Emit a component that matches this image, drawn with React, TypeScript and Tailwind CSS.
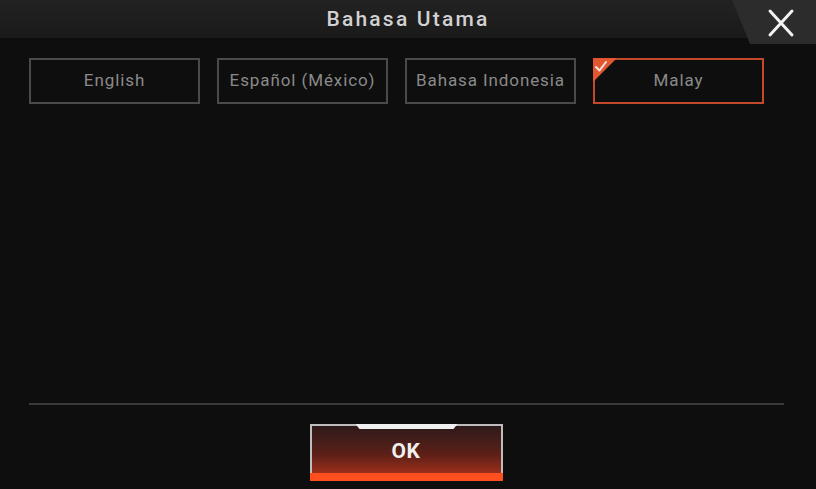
import React from "react";

const langs = ["English", "Español (México)", "Bahasa Indonesia", "Malay"];

export default function App() {
  return (
    <div
      className="relative w-[816px] h-[489px] overflow-hidden bg-[#0e0e0e] flex flex-col"
      style={{ fontFamily: "Roboto, 'DejaVu Sans', sans-serif" }}
    >
      {/* header */}
      <div className="relative h-[38px] shrink-0 bg-gradient-to-b from-[#222222] to-[#1a1a1a] flex items-center justify-center">
        <span className="text-[21px] font-medium text-[#d2d2d2] tracking-[2.2px] leading-none">
          Bahasa Utama
        </span>
        <div
          className="absolute right-0 top-0 w-[84px] h-[44px] bg-[#2c2c2c] flex items-center justify-center pl-[14px]"
          style={{ clipPath: "polygon(0 0, 100% 0, 100% 100%, 18px 100%)" }}
        >
          <svg width="30" height="30" viewBox="0 0 30 30" className="mt-[1px]">
            <path d="M4 3 L26 27 M26 3 L4 27" stroke="#f2f2f2" strokeWidth="3" strokeLinecap="round" />
          </svg>
        </div>
      </div>

      {/* language row */}
      <div className="flex gap-[17px] pl-[29px] pt-[20px]">
        {langs.map((l, i) => {
          const sel = i === 3;
          return (
            <div
              key={l}
              className={`relative w-[171px] h-[46px] flex items-center justify-center border-2 ${
                sel ? "border-[#c4492b]" : "border-[#4a4a4a]"
              } text-[#8a8a8a] text-[17px] tracking-[0.9px]`}
            >
              {sel && (
                <svg className="absolute -left-[2px] -top-[2px]" width="24" height="24" viewBox="0 0 24 24">
                  <path d="M0 0 L24 0 L0 24 Z" fill="#e2572f" />
                  <path d="M3 9 L6.5 12.5 L13 4" stroke="#f4e6e0" strokeWidth="2" fill="none" strokeLinecap="round" strokeLinejoin="round" />
                </svg>
              )}
              {l}
            </div>
          );
        })}
      </div>

      <div className="flex-1" />

      {/* divider */}
      <div className="ml-[29px] mr-[32px] h-[2px] bg-[#3a3a3a]" />

      {/* OK button */}
      <div className="flex justify-center pt-[19px] pb-[8px] pr-[4px]">
        <div className="relative w-[193px] h-[57px] border-2 border-b-0 border-[#bdbdbd] bg-gradient-to-b from-[#2e1a1a] via-[#5a1f17] to-[#b8341a] flex items-center justify-center">
          <div
            className="absolute -top-[2px] left-[44px] w-[102px] h-[5px] bg-[#f0f0f0]"
            style={{ clipPath: "polygon(0 0, 100% 0, calc(100% - 4px) 100%, 4px 100%)" }}
          />
          <span className="text-[21px] font-bold text-[#f0f0f0] tracking-[0.5px] -mt-[3px]">OK</span>
          <div className="absolute left-[-2px] right-[-2px] bottom-0 h-[8px] bg-[#ff4f1f]" />
        </div>
      </div>
    </div>
  );
}
